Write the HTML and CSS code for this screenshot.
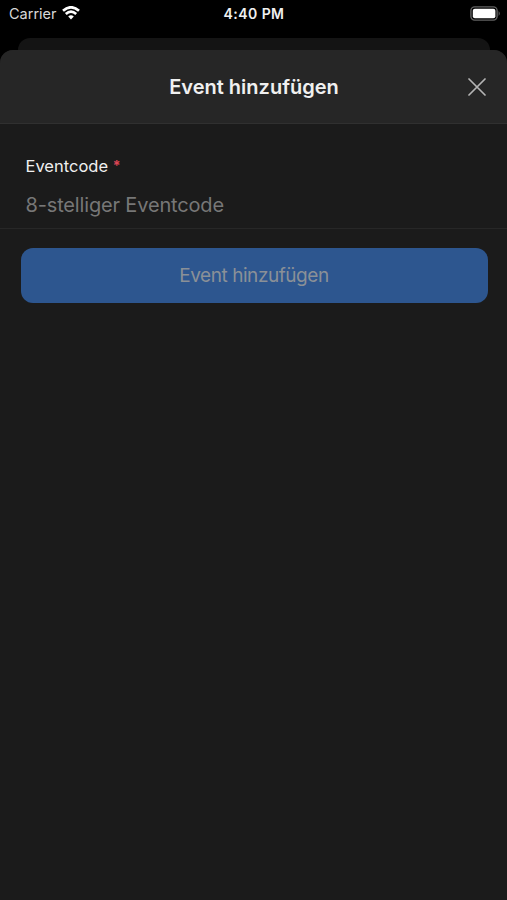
FILE: index.html
```html
<!DOCTYPE html>
<html lang="de">
<head>
    <meta charset="UTF-8">
    <meta name="viewport" content="width=device-width, initial-scale=1.0">
    <title>Event hinzufügen</title>
    <link rel="stylesheet" href="styles.css">
</head>
<body>

<div class="status-bar">
    <div class="carrier">
        <span>Carrier</span>
        <svg class="wifi" viewBox="0 0 18 14" width="18" height="14">
            <path d="M1 4.8 Q9 -2.2 17 4.8" />
            <path d="M3.8 8 Q9 3.4 14.2 8" />
            <path class="dot" d="M6.2 10.5 Q9 8.2 11.8 10.5 L9 13.5 Z" />
        </svg>
    </div>
    <div class="time">4:40 PM</div>
    <div class="battery">
        <svg viewBox="0 0 31 15" width="31" height="15">
            <rect class="shell" x="0.9" y="0.9" width="26.2" height="13.2" rx="3.8" />
            <rect class="level" x="2.8" y="2.8" width="22.6" height="9.4" rx="2" />
            <path class="tip" d="M28.6 5 Q31 7.5 28.6 10 Z" />
        </svg>
    </div>
</div>

<div class="back-card"></div>

<div class="modal">
    <div class="modal-header">
        <h1>Event hinzufügen</h1>
        <button class="close" aria-label="Schließen">
            <svg viewBox="0 0 18 18" width="18" height="18">
                <path d="M1 1 L17 17 M17 1 L1 17" />
            </svg>
        </button>
    </div>
    <form class="form">
        <div class="field">
            <label for="code">Eventcode <span class="required">*</span></label>
            <input type="text" id="code" placeholder="8-stelliger Eventcode">
        </div>
        <button type="button" class="submit" disabled>Event hinzufügen</button>
    </form>
</div>

</body>
</html>
```
FILE: styles.css
```css
* {
    box-sizing: border-box;
}
body {
    display: flex;
    flex-direction: column;
    height: 100vh;
    margin: 0;
    background: #000;
    color: #f0f0f0;
    font-family: Inter, "Liberation Sans", sans-serif;
    overflow: hidden;
}
.status-bar {
    display: grid;
    grid-template-columns: 1fr auto 1fr;
    align-items: start;
    height: 38px;
    padding: 5px 6px 0 9px;
    font-size: 14.5px;
    line-height: 18px;
}
.carrier {
    display: flex;
    gap: 5px;
    color: #d8d8d8;
}
.wifi {
    margin-top: 1px;
    fill: none;
    stroke: #fff;
    stroke-width: 2.7;
}
.wifi .dot {
    fill: #fff;
    stroke: none;
}
.time {
    margin-right: 2px;
    font-weight: 600;
    font-size: 14px;
    letter-spacing: 0.45px;
}
.battery {
    display: flex;
    justify-content: flex-end;
    padding-top: 1px;
}
.shell {
    fill: none;
    stroke: #626262;
    stroke-width: 1.4;
}
.level {
    fill: #fff;
}
.tip {
    fill: #626262;
}
.back-card {
    height: 12px;
    margin: 0 17px 0 18px;
    background: #141414;
    border-radius: 12px 12px 0 0;
}
.modal {
    flex: 1;
    background: #1b1b1b;
    border-radius: 13px 13px 0 0;
    overflow: hidden;
}
.modal-header {
    display: grid;
    grid-template-columns: 1fr auto 1fr;
    align-items: center;
    height: 74px;
    padding: 0 21px 0 22px;
    background: #262626;
    border-bottom: 1px solid #303030;
}
h1 {
    grid-column: 2;
    margin: 0;
    font-size: 20px;
    font-weight: 600;
}
.close {
    display: flex;
    justify-self: end;
    padding: 0;
    border: none;
    background: none;
}
.close path {
    fill: none;
    stroke: #b4b4b4;
    stroke-width: 1.7;
    stroke-linecap: round;
}
.field {
    display: flex;
    flex-direction: column;
    height: 105px;
    padding: 32px 25px 0;
    border-bottom: 1px solid #272727;
}
label {
    padding-left: 0.5px;
    font-size: 16.5px;
    line-height: 20px;
}
.required {
    color: #dd4555;
    font-size: 14px;
    font-weight: 700;
    line-height: 1;
    vertical-align: 1px;
}
input {
    height: 30px;
    margin-top: 14px;
    padding: 0 0 0 0.5px;
    border: none;
    outline: none;
    background: none;
    color: #f0f0f0;
    font-family: inherit;
    font-size: 20px;
    letter-spacing: -0.16px;
}
input::placeholder {
    color: #777;
}
.submit {
    display: block;
    width: 467px;
    height: 55px;
    margin: 19px 0 0 20.5px;
    border: none;
    border-radius: 12px;
    background: #2d568f;
    color: #8a9097;
    font-family: inherit;
    font-size: 19px;
    letter-spacing: -0.45px;
}
```
